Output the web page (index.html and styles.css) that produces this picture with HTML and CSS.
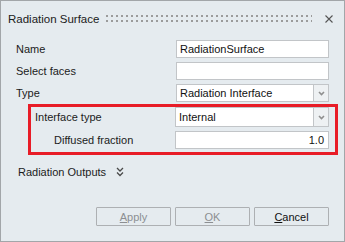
FILE: index.html
```html
<!DOCTYPE html>
<html lang="en">
  <head>
    <meta charset="UTF-8" />
    <title>Radiation Surface</title>
    <link rel="stylesheet" href="styles.css">
  </head>
  <body>
    <div class="window">
      <div class="titlebar">
        <span class="title">Radiation Surface</span>
        <svg class="grip" width="206" height="7">
          <defs>
            <pattern id="dots" width="5" height="5" patternUnits="userSpaceOnUse">
              <rect width="2" height="2" fill="#9b9b9b" />
            </pattern>
          </defs>
          <rect width="206" height="7" fill="url(#dots)" />
        </svg>
        <svg class="close" width="8" height="8" viewBox="0 0 8 8">
          <path d="M0.5 0.5 L7.5 7.5 M7.5 0.5 L0.5 7.5" stroke="#555" stroke-width="1.1" />
        </svg>
      </div>

      <div class="fields">
        <div class="row">
          <span class="label">Name</span>
          <div class="input">RadiationSurface</div>
        </div>
        <div class="row">
          <span class="label">Select faces</span>
          <div class="input"></div>
        </div>
        <div class="row">
          <span class="label">Type</span>
          <div class="select">
            <span class="value">Radiation Interface</span>
            <span class="drop">
              <svg width="7" height="5" viewBox="0 0 7 5"><path d="M1 1 L3.5 3.5 L6 1" fill="none" stroke="#8f8f8f" stroke-width="1.6" /></svg>
            </span>
          </div>
        </div>
      </div>

      <div class="highlight">
        <div class="row sub tall">
          <span class="label">Interface type</span>
          <div class="select">
            <span class="value">Internal</span>
            <span class="drop">
              <svg width="7" height="5" viewBox="0 0 7 5"><path d="M1 1 L3.5 3.5 L6 1" fill="none" stroke="#8f8f8f" stroke-width="1.6" /></svg>
            </span>
          </div>
        </div>
        <div class="row sub">
          <span class="label indent">Diffused fraction</span>
          <div class="input num">1.0</div>
        </div>
      </div>

      <div class="outputs">
        <span>Radiation Outputs</span>
        <svg class="expand" width="8" height="10" viewBox="0 0 8 10">
          <path d="M1 1 L4 4 L7 1 M1 5.5 L4 8.5 L7 5.5" fill="none" stroke="#4a4a4a" stroke-width="1.3" />
        </svg>
      </div>

      <div class="actions">
        <button class="btn" disabled><u>A</u>pply</button>
        <button class="btn" disabled><u>O</u>K</button>
        <button class="btn"><u>C</u>ancel</button>
      </div>
    </div>
  </body>
</html>
```

FILE: styles.css
```css
body {
  margin: 0;
  font-family: "Liberation Sans", Arial, sans-serif;
  font-size: 11px;
  color: #1b1b1b;
}
.window {
  box-sizing: border-box;
  width: 345px;
  height: 242px;
  border: 1px solid #a2a6a9;
  background-color: #e5ebef;
  display: flex;
  flex-direction: column;
}
.titlebar {
  height: 35px;
  display: flex;
  align-items: center;
  padding: 0 11px 0 7px;
}
.title {
  font-size: 11.5px;
  color: #202020;
}
.grip {
  margin-left: auto;
  margin-right: 13px;
}
.fields {
  margin-top: 4px;
  display: flex;
  flex-direction: column;
  gap: 4px;
}
.row {
  display: grid;
  grid-template-columns: 175px 153px;
  height: 18px;
  align-items: center;
}
.label {
  padding-left: 15px;
}
.input,
.select {
  box-sizing: border-box;
  height: 100%;
  background-color: #fff;
  border: 1px solid #c2c5c8;
  display: flex;
  align-items: center;
  padding-left: 3px;
  color: #111;
}
.select .value {
  flex: 1;
}
.drop {
  box-sizing: border-box;
  width: 16px;
  height: calc(100% + 2px);
  margin-right: -1px;
  border: 1px solid #c2c5c8;
  background-color: #eef1f3;
  display: flex;
  align-items: center;
  justify-content: center;
}
.highlight {
  margin: 2px 0 0 27px;
  width: 310px;
  box-sizing: border-box;
  border: 3px solid #e81c27;
  padding: 0 6px 3px 0;
  display: flex;
  flex-direction: column;
  gap: 4px;
}
.row.sub {
  grid-template-columns: 144px 154px;
}
.row.sub .label {
  padding-left: 4px;
}
.row.sub .label.indent {
  padding-left: 23px;
}
.row.tall {
  height: 20px;
}
.num {
  justify-content: flex-end;
  padding-right: 4px;
}
.outputs {
  margin-top: 8px;
  height: 18px;
  padding-left: 17px;
  display: flex;
  align-items: center;
  gap: 10px;
}
.actions {
  margin-top: auto;
  padding: 0 15px 15px 0;
  display: flex;
  justify-content: flex-end;
  gap: 4px;
}
.btn {
  width: 75px;
  height: 19px;
  padding: 0;
  border: 1px solid #adb0b3;
  border-radius: 1px;
  background-color: #e5ebef;
  font-family: "Liberation Sans", Arial, sans-serif;
  font-size: 11px;
  color: #111;
}
.btn:disabled {
  color: #8c8f92;
}
```
